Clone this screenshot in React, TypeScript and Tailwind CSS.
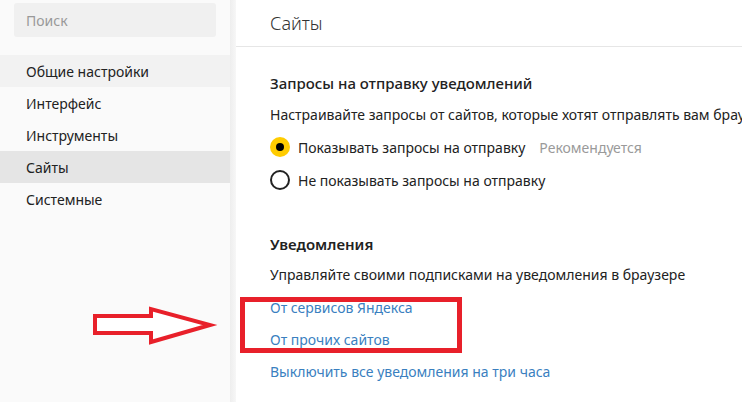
import React from "react";

const font = { fontFamily: '"Noto Sans", "Open Sans", sans-serif' };

export default function App() {
  const nav = [
    { label: "Общие настройки", cls: "bg-[#f2f2f2]" },
    { label: "Интерфейс", cls: "" },
    { label: "Инструменты", cls: "" },
    { label: "Сайты", cls: "bg-[#e5e5e5]" },
    { label: "Системные", cls: "" },
  ];
  return (
    <div
      className="relative flex w-[742px] h-[402px] overflow-hidden bg-white text-[#222]"
      style={font}
    >
      <aside className="w-[230px] shrink-0 bg-[#fafafa] flex flex-col">
        <div className="px-[14px] pt-[3px]">
          <div className="h-[34px] rounded-[3px] bg-[#f0f0f0] flex items-center px-[12px] text-[14px] text-[#999]">
            Поиск
          </div>
        </div>
        <nav className="mt-[18px] flex flex-col">
          {nav.map((n) => (
            <div
              key={n.label}
              className={`h-[32px] flex items-center pl-[26px] text-[14px] text-[#222] ${n.cls}`}
            >
              {n.label}
            </div>
          ))}
        </nav>
      </aside>
      <div className="w-[6px] shrink-0 bg-gradient-to-r from-[#eeeeee] to-[#f7f7f7]" />
      <main className="flex-1 flex flex-col min-w-0">
        <div className="h-[47px] border-b border-[#e6e6e6] flex items-center pl-[34px] text-[18px] text-[#333] font-light">
          Сайты
        </div>
        <div className="pl-[34px] whitespace-nowrap">
          <div className="mt-[24px] text-[15px] font-medium text-[#222] leading-[24px]">
            Запросы на отправку уведомлений
          </div>
          <div className="mt-[8px] text-[14px] leading-[24px]">
            Настраивайте запросы от сайтов, которые хотят отправлять вам браузерные уведомления
          </div>
          <div className="mt-[8px] flex items-center h-[24px] text-[14px]">
            <span className="w-[20px] h-[20px] rounded-full bg-[#ffcc00] flex items-center justify-center">
              <span className="w-[8px] h-[8px] rounded-full bg-black" />
            </span>
            <span className="ml-[8px]">Показывать запросы на отправку</span>
            <span className="ml-[14px] text-[#9a9a9a]">Рекомендуется</span>
          </div>
          <div className="mt-[9px] flex items-center h-[24px] text-[14px]">
            <span className="w-[20px] h-[20px] rounded-full border-2 border-[#222] box-border" />
            <span className="ml-[8px]">Не показывать запросы на отправку</span>
          </div>
          <div className="mt-[40px] text-[15px] font-semibold leading-[24px]">Уведомления</div>
          <div className="mt-[7px] text-[14px] leading-[24px]">
            Управляйте своими подписками на уведомления в браузере
          </div>
          <div className="mt-[9px] text-[14px] leading-[24px] text-[#3a7fbf]">От сервисов Яндекса</div>
          <div className="mt-[8px] text-[14px] leading-[24px] text-[#3a7fbf]">От прочих сайтов</div>
          <div className="mt-[8px] text-[14px] leading-[24px] text-[#3a7fbf]">
            Выключить все уведомления на три часа
          </div>
        </div>
      </main>
      <div className="absolute left-[240px] top-[297px] w-[222px] h-[56px] border-[5px] border-[#e8202a]" />
      <svg
        className="absolute left-[88px] top-[304px]"
        width="132"
        height="44"
        viewBox="0 0 132 44"
      >
        <polygon
          points="7,12 63,12 63,5 122,21 63,38 63,29 7,29"
          fill="white"
          stroke="#e8202a"
          strokeWidth="4"
          strokeLinejoin="miter"
        />
      </svg>
    </div>
  );
}
